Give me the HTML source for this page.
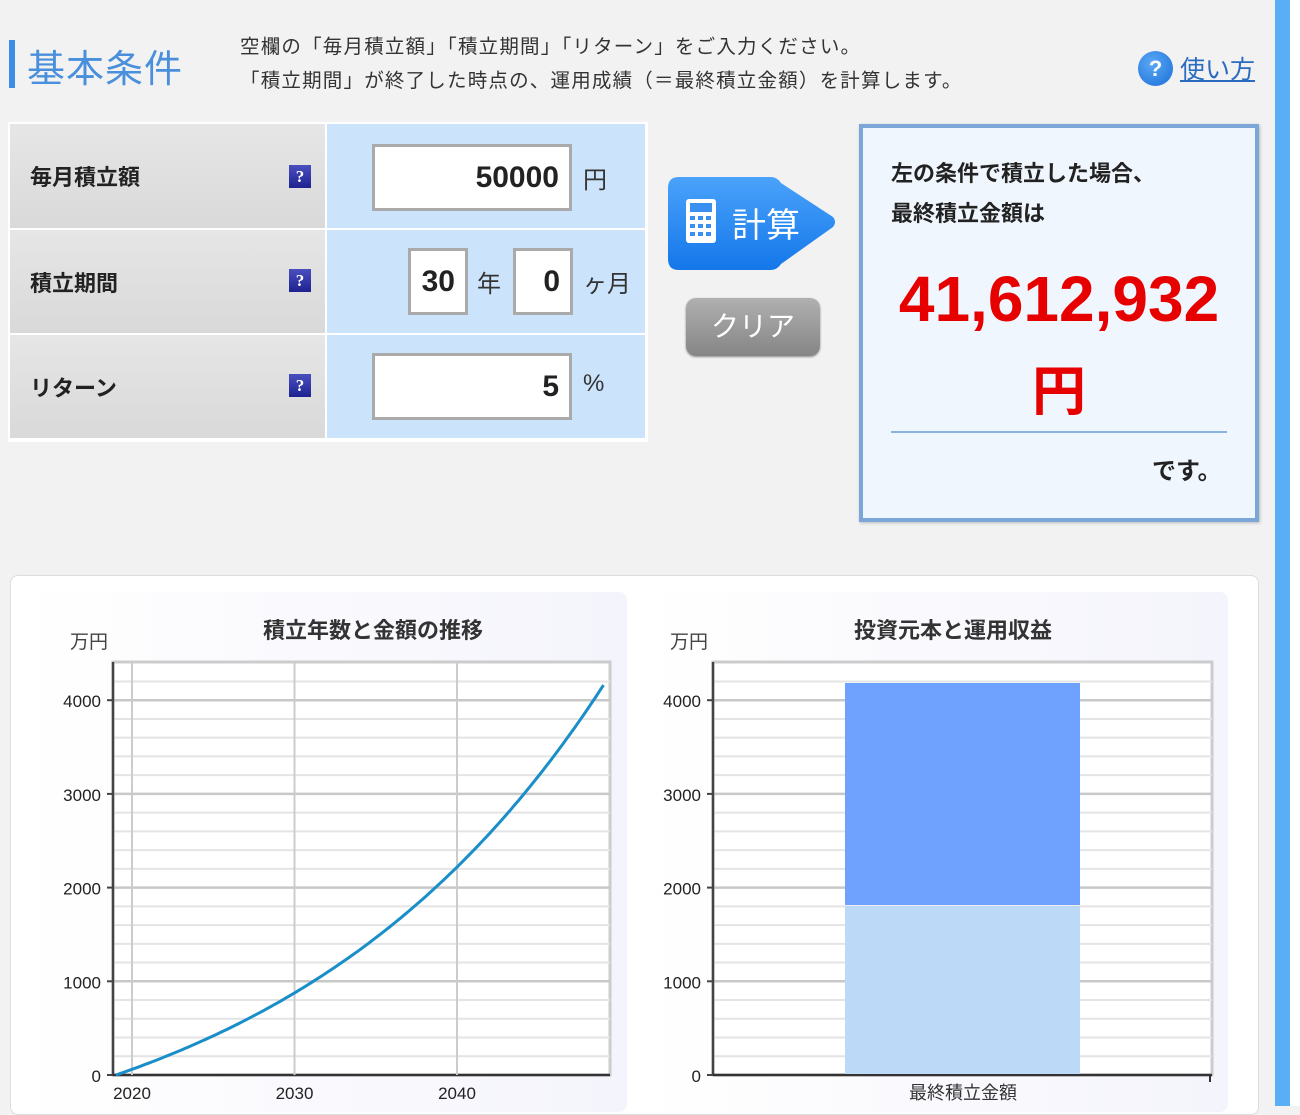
<!DOCTYPE html>
<html><head><meta charset="utf-8"><style>
*{margin:0;padding:0;box-sizing:border-box}
body{width:1300px;height:1106px;overflow:hidden;background:#f2f2f2;font-family:"Liberation Sans","Noto Sans CJK JP",sans-serif;position:relative;color:#222}
.a{position:absolute}
.lab{position:absolute;left:10px;width:315px;background:linear-gradient(#e6e6e6,#d9d9d9);font-weight:bold;font-size:22px;padding-left:20px;display:flex;align-items:center}
.val{position:absolute;left:327px;width:318px;background:#cce4fb}
.hq{position:absolute;left:289px;width:22px;height:23px;background:linear-gradient(#4a4fc0,#1e2290);color:#fff;font-weight:bold;font-size:17px;text-align:center;line-height:23px;font-family:"Liberation Serif",serif}
.inp{position:absolute;background:#fff;border:3px solid #aaa;font-size:30px;font-weight:bold;text-align:right;padding-right:10px;display:flex;align-items:center;justify-content:flex-end}
.u{position:absolute;font-size:24px;color:#333}
.yl{font-size:17px;fill:#222;text-anchor:end;font-family:"Liberation Sans",sans-serif}
</style></head><body>
<div class="a" style="left:9px;top:40px;width:6px;height:48px;background:#3a8ee6"></div>
<div class="a" style="left:27px;top:38px;font-size:38px;color:#4a8fdc;letter-spacing:1px">基本条件</div>
<div class="a" style="left:240px;top:30px;font-size:19.5px;letter-spacing:1.2px;color:#333;line-height:34px">空欄の「毎月積立額」「積立期間」「リターン」をご入力ください。<br>「積立期間」が終了した時点の、運用成績（＝最終積立金額）を計算します。</div>
<div class="a" style="left:1138px;top:51px;width:35px;height:35px;border-radius:50%;background:radial-gradient(circle at 40% 35%,#5aa8f5,#1a6ed8);color:#fff;font-weight:bold;font-size:22px;text-align:center;line-height:35px">?</div>
<div class="a" style="left:1180px;top:50px;font-size:25px;color:#2a6cc0;text-decoration:underline">使い方</div>
<div class="a" style="left:1275px;top:0;width:15px;height:1106px;background:#5aaef5"></div>
<div class="a" style="left:1290px;top:0;width:10px;height:1106px;background:#fff"></div>

<div class="a" style="left:8px;top:122px;width:640px;height:320px;background:#fff"></div>
<div class="lab" style="top:124px;height:104px">毎月積立額</div>
<div class="lab" style="top:230px;height:103px">積立期間</div>
<div class="lab" style="top:335px;height:103px">リターン</div>
<div class="val" style="top:124px;height:104px"></div>
<div class="val" style="top:230px;height:103px"></div>
<div class="val" style="top:335px;height:103px"></div>
<div class="hq" style="top:165px">?</div>
<div class="hq" style="top:269px">?</div>
<div class="hq" style="top:374px">?</div>
<div class="inp" style="left:372px;top:144px;width:200px;height:67px">50000</div>
<div class="u" style="left:583px;top:160px">円</div>
<div class="inp" style="left:408px;top:248px;width:60px;height:67px">30</div>
<div class="u" style="left:477px;top:264px">年</div>
<div class="inp" style="left:513px;top:248px;width:60px;height:67px">0</div>
<div class="u" style="left:583px;top:264px">ヶ月</div>
<div class="inp" style="left:372px;top:353px;width:200px;height:67px">5</div>
<div class="u" style="left:583px;top:370px">%</div>

<svg class="a" style="left:665px;top:175px" width="180" height="100">
<defs><linearGradient id="bg" x1="0" y1="0" x2="0" y2="1"><stop offset="0" stop-color="#4aa2fa"/><stop offset="1" stop-color="#1477ea"/></linearGradient></defs>
<path d="M14 2 H106 Q112 2 116 8 L168 42 Q172 47 168 52 L116 89 Q112 95 106 95 H14 Q3 95 3 84 V13 Q3 2 14 2Z" fill="url(#bg)"/>
<rect x="21" y="24" width="30" height="44" rx="3" fill="#fff"/>
<rect x="25" y="28" width="22" height="9" fill="#3a90f0"/>
<g fill="#3a90f0"><rect x="25" y="41" width="5" height="4"/><rect x="33" y="41" width="5" height="4"/><rect x="41" y="41" width="5" height="4"/><rect x="25" y="49" width="5" height="4"/><rect x="33" y="49" width="5" height="4"/><rect x="41" y="49" width="5" height="4"/><rect x="25" y="57" width="5" height="4"/><rect x="33" y="57" width="5" height="4"/><rect x="41" y="57" width="5" height="4"/></g>
<text x="67" y="62" font-size="34" fill="#fff" font-family="Noto Sans CJK JP,sans-serif">計算</text>
</svg>
<div class="a" style="left:686px;top:298px;width:134px;height:58px;border-radius:10px;background:linear-gradient(#b0b0b0,#858585);color:#fff;font-size:28px;text-align:center;line-height:58px;box-shadow:0 1px 2px #888">クリア</div>

<div class="a" style="left:859px;top:124px;width:400px;height:398px;border:4px solid #7aa6d8;background:#f0f6fd;box-shadow:1px 1px 3px #bbb"></div>
<div class="a" style="left:891px;top:154px;font-size:22px;font-weight:bold;line-height:40px">左の条件で積立した場合、<br>最終積立金額は</div>
<div class="a" style="left:863px;top:262px;width:392px;text-align:center;font-size:64px;font-weight:bold;color:#e60000">41,612,932</div>
<div class="a" style="left:863px;top:347px;width:392px;text-align:center;font-size:54px;font-weight:bold;color:#e60000;font-family:'Noto Sans CJK JP',sans-serif">円</div>
<div class="a" style="left:891px;top:431px;width:336px;height:2px;background:#8ab4e0"></div>
<div class="a" style="left:1152px;top:451px;font-size:24px;font-weight:bold">です。</div>

<div class="a" style="left:10px;top:575px;width:1249px;height:540px;background:#fff;border:1px solid #ddd;border-radius:8px"></div>
<div class="a" style="left:20px;top:592px;width:607px;height:520px;background:linear-gradient(90deg,#fff,#f4f4fc);border-radius:8px"></div>
<div class="a" style="left:640px;top:592px;width:588px;height:520px;background:linear-gradient(90deg,#fff,#f4f4fc);border-radius:8px"></div>
<svg id="ch" class="a" style="left:0;top:0" width="1300" height="1106"></svg>
<script>
var s='';
function chart(x0,x1,title,tx){
 var y0=1075;
 s+='<rect x="'+x0+'" y="662" width="'+(x1-x0)+'" height="413" fill="#fff" stroke="#ccc" stroke-width="3"/>';
 for(var v=200;v<=4400;v+=200){var y=y0-v*0.0937;if(y<663)break;s+='<line x1="'+x0+'" x2="'+x1+'" y1="'+y+'" y2="'+y+'" stroke="'+(v%1000?'#e4e4e4':'#c8c8c8')+'" stroke-width="'+(v%1000?2:2.5)+'"/>';}
 s+='<line x1="'+x0+'" y1="662" x2="'+x0+'" y2="'+y0+'" stroke="#444" stroke-width="2.5"/>';
 s+='<line x1="'+x0+'" y1="'+y0+'" x2="'+x1+'" y2="'+y0+'" stroke="#333" stroke-width="2.5"/>';
 for(var v=0;v<=4000;v+=1000){var y=y0-v*0.0937;s+='<line x1="'+(x0-6)+'" x2="'+x0+'" y1="'+y+'" y2="'+y+'" stroke="#444" stroke-width="2"/><text class="yl" x="'+(x0-12)+'" y="'+(y+7)+'">'+v+'</text>';}
 s+='<text x="'+(x0-43)+'" y="648" font-size="19" fill="#444" font-family="Noto Sans CJK JP,sans-serif">万円</text>';
 s+='<text x="'+tx+'" y="638" font-size="22" font-weight="bold" fill="#333" text-anchor="middle" font-family="Noto Sans CJK JP,sans-serif">'+title+'</text>';
}
chart(113,610,'積立年数と金額の推移',373);
[2020,2030,2040].forEach(function(yr){var x=132+(yr-2020)*16.25;s+='<line x1="'+x+'" x2="'+x+'" y1="663" y2="1075" stroke="#ccc" stroke-width="2"/><text x="'+x+'" y="1099" font-size="17" fill="#222" text-anchor="middle">'+yr+'</text>';});
var d='',r=0.05/12;
for(var m=0;m<=361;m+=3){var fv=5*(Math.pow(1+r,m)-1)/r;var x=116+m/12*16.25,y=1075-fv*0.0937;d+=(m?'L':'M')+x.toFixed(1)+' '+y.toFixed(1);}
s+='<path d="'+d+'" fill="none" stroke="#1a8ec8" stroke-width="3"/>';
chart(713,1212,'投資元本と運用収益',953);
s+='<rect x="845" y="683" width="235" height="222" fill="#6fa2fe"/><rect x="845" y="906" width="235" height="168" fill="#bcd9f8"/>';
s+='<line x1="1210" y1="1075" x2="1210" y2="1082" stroke="#333" stroke-width="2"/>';
s+='<text x="963" y="1099" font-size="18" fill="#333" text-anchor="middle" font-family="Noto Sans CJK JP,sans-serif">最終積立金額</text>';
document.getElementById('ch').innerHTML=s;
</script>
</body></html>
